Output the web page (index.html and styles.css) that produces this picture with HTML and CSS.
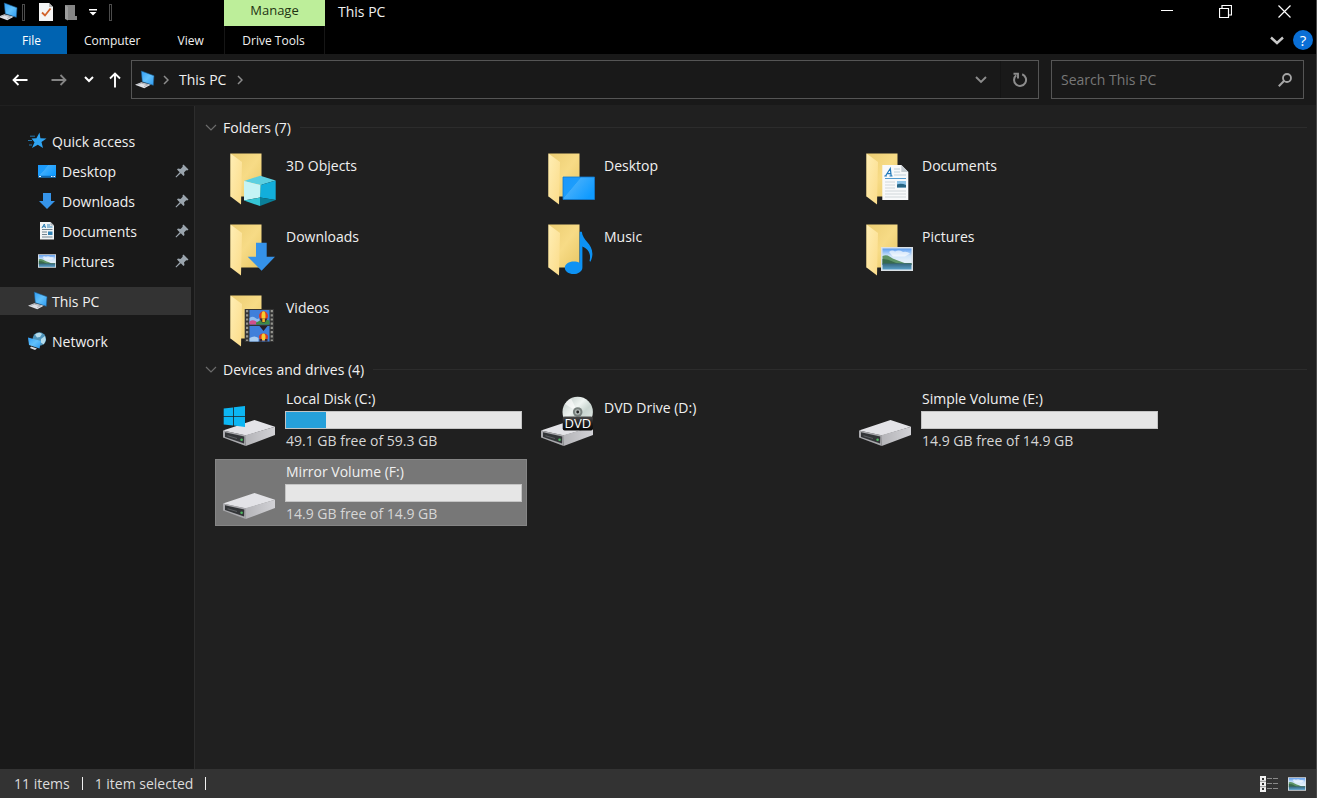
FILE: index.html
```html
<!DOCTYPE html>
<html lang="en">
<head>
<meta charset="utf-8">
<title>This PC</title>
<link rel="stylesheet" href="styles.css">
</head>
<body>
<svg class="defs" aria-hidden="true">
  <defs>
    <linearGradient id="gBack" x1="0" y1="0" x2="1" y2="1"><stop offset="0" stop-color="#eccd72"/><stop offset="0.5" stop-color="#f7db86"/><stop offset="1" stop-color="#e8c765"/></linearGradient>
    <linearGradient id="gFlap" x1="0" y1="0" x2="1" y2="1"><stop offset="0" stop-color="#ffeeb4"/><stop offset="1" stop-color="#fbdc8a"/></linearGradient>
    <linearGradient id="gScreen" x1="0" y1="0" x2="1" y2="1"><stop offset="0" stop-color="#2f9df5"/><stop offset="0.5" stop-color="#62c1fb"/><stop offset="1" stop-color="#2c98f0"/></linearGradient>
    <linearGradient id="gDesk" x1="0" y1="0" x2="1" y2="0.6"><stop offset="0" stop-color="#1c97fb"/><stop offset="0.42" stop-color="#1c9dfc"/><stop offset="0.44" stop-color="#3dacfc"/><stop offset="1" stop-color="#109bff"/></linearGradient>
    <linearGradient id="gSky" x1="0" y1="0" x2="0" y2="1"><stop offset="0" stop-color="#5b9df0"/><stop offset="0.35" stop-color="#cfe4fa"/><stop offset="0.6" stop-color="#e4f0fa"/></linearGradient>
    <linearGradient id="gSea" x1="0" y1="0" x2="0" y2="1"><stop offset="0" stop-color="#35647c"/><stop offset="1" stop-color="#5aa0c8"/></linearGradient>
    <linearGradient id="gSide" x1="0" y1="0" x2="1" y2="0"><stop offset="0" stop-color="#b4b4b8"/><stop offset="1" stop-color="#d2d2d6"/></linearGradient>
    <linearGradient id="gDisc" x1="0" y1="0" x2="1" y2="1"><stop offset="0" stop-color="#b9c4c1"/><stop offset="0.4" stop-color="#eef4f1"/><stop offset="0.6" stop-color="#c9d5d0"/><stop offset="1" stop-color="#e8efec"/></linearGradient>
    <linearGradient id="gLabel" x1="0" y1="0" x2="0" y2="1"><stop offset="0" stop-color="#4a4a4a"/><stop offset="0.5" stop-color="#1c1c1c"/><stop offset="1" stop-color="#080808"/></linearGradient>
  </defs>
  <symbol id="pc" viewBox="0 0 20 20">
    <path d="M6.3 1 19 5.7 18.3 15.3 7.3 11.7z" fill="url(#gScreen)" stroke="#1d5f93" stroke-width=".6"/>
    <path d="M0 14.7 6.3 12.3 15.7 14.7 9.3 18.3z" fill="#dfe1e6"/>
    <path d="M2.5 14.6 6.5 13.2 13 14.9M9 16.6l3.6-1.8" fill="none" stroke="#9a9ea6" stroke-width=".7"/>
  </symbol>
  <symbol id="pin" viewBox="0 0 14 14">
    <path d="M8.500.5 13.500 5.500 12.300 6.500 11.200 6.300 9 8.500 9.500 11 8.500 12 5.800 9.300 1.200 13.500.5 12.800 4.700 8.200 2 5.500 3 4.500 5.500 5 7.700 2.800 7.500 1.500z" fill="#9aa4ad"/>
  </symbol>
  <symbol id="picture" viewBox="0 0 32 24">
    <path d="M0 0h32v24H0z" fill="#dbe1e6"/>
    <path d="M1.500 1.500h29v21h-29z" fill="url(#gSky)"/>
    <path d="M8 5q3-2.500 6-.5 4-2 8 .5 4-1 7 1.500l-5 3H12z" fill="#fff" opacity=".65"/>
    <path d="M1.500 9q4-1.500 7 .5t7 3.500 8 3h7v2h-29z" fill="#5e9467"/>
    <path d="M1.500 12q6 0 10 2.500t10 2h9v1h-29z" fill="#386a4c"/>
    <path d="M1.500 16.500h29v6h-29z" fill="url(#gSea)"/>
  </symbol>
  <symbol id="folder" viewBox="0 0 56 58">
    <path d="M9.500 3.500h31v43h-31z" fill="url(#gBack)"/>
    <path d="M9.500 3.500 21 12 20 54.500 9.500 46.500z" fill="url(#gFlap)"/>
  </symbol>
  <symbol id="drive" viewBox="0 0 56 58">
    <path d="M2 38.500 33.500 28 54 34.700 25 43.500z" fill="#e3e3e7"/>
    <path d="M25 43 54 34.700V43L24.700 54z" fill="url(#gSide)"/>
    <path d="M2 38.500 25 43.200 24.700 54 2 45.500z" fill="#a9a9ad"/>
    <path d="M4 40.300 23.300 44.400 23.100 51.600 4 45z" fill="#333538"/>
    <path d="M6.500 43.300 16 45.900v1L6.500 44.300z" fill="#5c5e61"/>
    <circle cx="20.600" cy="47.800" r="1.300" fill="#4fb860"/>
  </symbol>
</svg>

<div class="window">
  <header class="titlebar">
    <div class="quickbar">
      <svg class="ico20 app-ico" aria-hidden="true"><use href="#pc"/></svg>
      <span class="grip"></span>
      <button class="quick prop" aria-label="Properties">
        <svg width="14" height="18" viewBox="0 0 14 18"><path d="M0 0h10l4 4v14H0z" fill="#f4f4f4"/><path d="M10 0v4h4z" fill="#b9b9b9"/><path d="M3 9.500 6 12.500 11.500 5.500" fill="none" stroke="#d2622a" stroke-width="1.800"/></svg>
      </button>
      <button class="quick newf" aria-label="New folder">
        <svg width="12" height="17" viewBox="0 0 12 17"><path d="M0 1h10v11h2v4H3z" fill="#858585"/><path d="M0 1 3 3v13.500L0 15z" fill="#9c9c9c"/></svg>
      </button>
      <button class="quick more" aria-label="Customize Quick Access Toolbar">
        <svg width="8" height="7" viewBox="0 0 8 7"><path d="M0 0h8v1.400H0zM.5 3h7L4 6.500z" fill="#fff"/></svg>
      </button>
      <span class="grip"></span>
    </div>
    <div class="manage">Manage</div>
    <h1 class="title">This PC</h1>
    <div class="controls">
      <button aria-label="Minimize"><svg width="12" height="12" viewBox="0 0 12 12"><path d="M0 5.500h12" stroke="#fff"/></svg></button>
      <button aria-label="Restore"><svg width="13" height="13" viewBox="0 0 13 13"><path d="M.5 3.500h9v9h-9zM3 3V.5h9.500V10H10" fill="none" stroke="#fff" stroke-width="1.200"/></svg></button>
      <button aria-label="Close"><svg width="13" height="13" viewBox="0 0 13 13"><path d="M.5.5l12 12M12.500.5l-12 12" stroke="#fff" stroke-width="1.200"/></svg></button>
    </div>
  </header>

  <nav class="ribbon" aria-label="Ribbon">
    <button class="tab file">File</button>
    <div class="tabs"><button class="tab">Computer</button><button class="tab">View</button></div>
    <button class="tab tools">Drive Tools</button>
    <div class="ribbon-end">
      <button aria-label="Expand the Ribbon"><svg width="14" height="9" viewBox="0 0 14 9"><path d="M1 1.500l6 5.500 6-5.500" fill="none" stroke="#c8c8c8" stroke-width="2.400"/></svg></button>
      <button class="help" aria-label="Help">?</button>
    </div>
  </nav>

  <div class="navrow">
    <div class="arrows">
      <button class="arrow" aria-label="Back"><svg width="16" height="12" viewBox="0 0 16 12"><path d="M6.500 1 1.500 6l5 5M1.500 6H15.500" fill="none" stroke="#fff" stroke-width="1.800"/></svg></button>
      <button class="arrow fwd" aria-label="Forward"><svg width="16" height="12" viewBox="0 0 16 12"><path d="M9.500 1l5 5-5 5M14.500 6H.5" fill="none" stroke="#858585" stroke-width="1.800"/></svg></button>
      <button class="arrow recent" aria-label="Recent locations"><svg width="10" height="7" viewBox="0 0 10 7"><path d="M1 1l4 4 4-4" fill="none" stroke="#fff" stroke-width="2"/></svg></button>
      <button class="arrow" aria-label="Up"><svg width="12" height="16" viewBox="0 0 12 16"><path d="M1 6.500l5-5 5 5M6 1.500V15.500" fill="none" stroke="#fff" stroke-width="1.900"/></svg></button>
    </div>
    <div class="address">
      <svg class="ico20" aria-hidden="true"><use href="#pc"/></svg>
      <svg class="crumb-sep" width="6" height="10" viewBox="0 0 6 10"><path d="M1 1l4 4-4 4" fill="none" stroke="#8c8c8c" stroke-width="1.500"/></svg>
      <button class="crumb">This PC</button>
      <svg class="crumb-sep" width="6" height="10" viewBox="0 0 6 10"><path d="M1 1l4 4-4 4" fill="none" stroke="#8c8c8c" stroke-width="1.500"/></svg>
      <span class="grow"></span>
      <button class="addr-btn" aria-label="Previous locations"><svg width="12" height="8" viewBox="0 0 12 8"><path d="M1 1l5 5 5-5" fill="none" stroke="#8c8c8c" stroke-width="1.900"/></svg></button>
      <button class="addr-btn refresh" aria-label="Refresh"><svg width="16" height="16" viewBox="0 0 16 16"><path d="M10.200 2.300A6 6 0 1 1 4.200 3.300" fill="none" stroke="#8c8c8c" stroke-width="2"/><path d="M1.500 1.700H6V6.500" fill="none" stroke="#8c8c8c" stroke-width="1.900"/></svg></button>
    </div>
    <form class="search">
      <input type="text" aria-label="Search This PC" placeholder="Search This PC">
      <button type="button" aria-label="Search"><svg width="14" height="14" viewBox="0 0 14 14"><circle cx="9" cy="5" r="4" fill="none" stroke="#a5a5a5" stroke-width="1.800"/><path d="M6.200 7.800.8 13.200" stroke="#a5a5a5" stroke-width="2"/></svg></button>
    </form>
  </div>

  <div class="body">
    <nav class="sidebar" aria-label="Navigation pane">
      <a class="item" href="#quick">
        <svg class="ico20" viewBox="0 0 20 20" aria-hidden="true"><path d="M11.500 1.500 12.400 7.200 18.500 7.500 13.500 11 15 17 9.800 13.800 4 17 6.500 11.300 3.500 7.400 8.400 7.200z" fill="#2fa4f2"/><path d="M2 5.200h5M0 9.500h4M1 14h3" stroke="#2577ad"/></svg>
        <span>Quick access</span></a>
      <a class="item sub" href="#desktop">
        <svg class="ico20" viewBox="0 0 20 20" aria-hidden="true"><path d="M0 4h18v12.500H0z" fill="url(#gDesk)"/><path d="M0 15.500h18" stroke="#0d6ab8" stroke-width="1.500"/><path d="M1 15.500h2M13 15.500h1.500M15.500 15.500H17" stroke="#e9f5ff"/></svg>
        <span>Desktop</span><svg class="pin" aria-hidden="true"><use href="#pin"/></svg></a>
      <a class="item sub" href="#downloads">
        <svg class="ico20" viewBox="0 0 20 20" aria-hidden="true"><path d="M5 2h8v8h4L9 18 1 10h4z" fill="#3694e9"/></svg>
        <span>Downloads</span><svg class="pin" aria-hidden="true"><use href="#pin"/></svg></a>
      <a class="item sub" href="#documents">
        <svg class="ico20" viewBox="0 0 20 20" aria-hidden="true"><path d="M2 1h10.500L16 4.500V18.500H2z" fill="#f2f4f5"/><path d="M12.500 1v3.500H16z" fill="#aab2b8"/><path d="M4 7 6.300 3 7.500 7M4.700 5.700h2.500M9 4h3M9 6h5.500" fill="none" stroke="#2f83b8"/><path d="M4 8.500h10.500M4 11h5M4 13.500h5M4 16h10.500" stroke="#71838f"/><path d="M10 10.500h4.500v3.500H10z" fill="#3182b4"/></svg>
        <span>Documents</span><svg class="pin" aria-hidden="true"><use href="#pin"/></svg></a>
      <a class="item sub" href="#pictures">
        <svg class="ico20" viewBox="0 0 20 20" aria-hidden="true"><use href="#picture" x="0" y="3" width="18" height="14"/></svg>
        <span>Pictures</span><svg class="pin" aria-hidden="true"><use href="#pin"/></svg></a>
      <a class="item root selected" href="#pc-root" aria-current="page">
        <svg class="ico20" aria-hidden="true"><use href="#pc"/></svg>
        <span>This PC</span></a>
      <a class="item root" href="#network">
        <svg class="ico20" viewBox="0 0 20 20" aria-hidden="true"><circle cx="11.300" cy="8" r="6.800" fill="#4f94ba"/><path d="M7 3.500q4-3 7-.5l-2 3-3 .5zM13 8l4-3 .8 4-2 4.500-3-2z" fill="#b5dcec"/><path d="M0 6.500 13 10 11.500 17.500 1 14z" fill="url(#gScreen)"/><path d="M3 15.500l6 2-2 1.500-5-2z" fill="#d7dbe0"/></svg>
        <span>Network</span></a>
    </nav>

    <main class="content">
      <button class="group" aria-expanded="true">
        <svg width="12" height="7" viewBox="0 0 12 7"><path d="M1 1l5 5 5-5" fill="none" stroke="#6c6c6c" stroke-width="1.200"/></svg>
        <span>Folders (7)</span><i></i>
      </button>
      <section class="grid folders" aria-label="Folders">
        <a class="tile" href="#3d">
          <svg class="big" viewBox="0 0 56 58" aria-hidden="true"><use href="#folder"/><path d="M23 31 39.300 25.700 54.700 30.500 39.500 35z" fill="#5ccfe0"/><path d="M23 31 39.500 35 39 47.500 23 50.500z" fill="#c5f3f5"/><path d="M39.500 35 54.700 30.500V50L39 47.500z" fill="#12aedb"/><path d="M23 50.500 39 47.500 39 56z" fill="#35c5d5"/><path d="M39 47.500 54.700 50 39 56z" fill="#0a7f99"/></svg>
          <span class="name">3D Objects</span></a>
        <a class="tile" href="#desktop">
          <svg class="big" viewBox="0 0 56 58" aria-hidden="true"><use href="#folder"/><path d="M24 27h31.500v22.500H24z" fill="url(#gDesk)" stroke="#0f79cf" stroke-width=".8"/></svg>
          <span class="name">Desktop</span></a>
        <a class="tile" href="#documents">
          <svg class="big" viewBox="0 0 56 58" aria-hidden="true"><use href="#folder"/><path d="M25.300 15h19l7 7v28h-26z" fill="#f8f9fa"/><path d="M44.300 15v7h7z" fill="#c5ccd1"/><path d="M28.500 26 33.300 18.500 34.200 26M30 23.700h4M27.300 26h2.500M32.500 26h3" fill="none" stroke="#1f78ba" stroke-width="1.200"/><path d="M37 19h6M37 22h6M37 25h12" stroke="#b8c9d6" stroke-width=".9"/><path d="M28 28.500h21" stroke="#3e8fc8" stroke-width=".9"/><path d="M28 32h10M28 35h10M28 38h10M28 41h21M28 44h21M28 47h21" stroke="#cdd3d7" stroke-width=".9"/><path d="M40 31h9v6.500h-9z" fill="#8ec4e8"/><path d="M40 34.500q4-1.500 9 .5v2.500h-9z" fill="#286584"/></svg>
          <span class="name">Documents</span></a>
        <a class="tile" href="#downloads">
          <svg class="big" viewBox="0 0 56 58" aria-hidden="true"><use href="#folder"/><path d="M35 21.700h10.700v14H54L40.600 49.700 26.700 35.700H35z" fill="#3592e9"/></svg>
          <span class="name">Downloads</span></a>
        <a class="tile" href="#music">
          <svg class="big" viewBox="0 0 56 58" aria-hidden="true"><use href="#folder"/><path d="M40.600 10.700h2.200c.8 9 10.600 11.500 10.600 22 0 3-.8 5.600-2 8-1-.5-1-.8-.7-1.600 1.600-7-2.300-11.500-7.300-13.600V46.500c0 4-4.400 6.600-8.800 6.600-5 0-8.800-2.600-8.800-6.300s4-6.400 9-6.400c2.200 0 4.200.5 5.800 1.400z" fill="#0d92f4"/></svg>
          <span class="name">Music</span></a>
        <a class="tile" href="#pictures">
          <svg class="big" viewBox="0 0 56 58" aria-hidden="true"><use href="#folder"/><use href="#picture" x="24" y="26" width="32" height="24"/></svg>
          <span class="name">Pictures</span></a>
        <a class="tile" href="#videos">
          <svg class="big" viewBox="0 0 56 58" aria-hidden="true"><use href="#folder"/><path d="M23.700 17h29.300v33H23.700z" fill="#343434"/><path d="M28.500 18h20v14.500h-20zM28.500 34h20v15.500h-20z" fill="#3f7fda"/><path d="M28.500 26q3-2.500 6 0t4-1v6h-10z" fill="#8fbdf0"/><path d="M28.500 29.500q3-2.500 7 0v3h-7z" fill="#d0508c"/><path d="M35 30.500q6-4 13.500-2v4H35z" fill="#3f8a45"/><path d="M28.500 46q5-3 9 0v3.500h-9z" fill="#a8cdf2"/><ellipse cx="42.500" cy="24" rx="4.500" ry="4.700" fill="#db3b27"/><ellipse cx="42.500" cy="24" rx="2" ry="4.700" fill="#f7cd2e"/><path d="M38.500 26.500h8l-2.500 4h-3z" fill="#392c30"/><path d="M41.300 26.500h2.600v3.500h-2.600z" fill="#f2b52b"/><path d="M38.500 34h8l-4 5z" fill="#271d25"/><ellipse cx="42.500" cy="45" rx="4.500" ry="3.500" fill="#d83a28"/><ellipse cx="42.500" cy="45" rx="2" ry="3.500" fill="#f7cd2e"/><path d="M38.500 47h2.500v2.500h-2.500zM44 47h2.500v2.500H44z" fill="#392c30"/><path d="M26.100 18v31M50.800 18v31" stroke="#96968f" stroke-width="2.200" stroke-dasharray="2.200 2"/></svg>
          <span class="name">Videos</span></a>
      </section>

      <button class="group" aria-expanded="true">
        <svg width="12" height="7" viewBox="0 0 12 7"><path d="M1 1l5 5 5-5" fill="none" stroke="#6c6c6c" stroke-width="1.200"/></svg>
        <span>Devices and drives (4)</span><i></i>
      </button>
      <section class="grid drives" aria-label="Devices and drives">
        <a class="tile" href="#c">
          <svg class="big" viewBox="0 0 56 58" aria-hidden="true"><use href="#drive"/><path d="M2.700 16.500 12 15.400V24.300H2.700zM12.800 15.300 24 14V24.300H12.800zM2.700 25.100H12V33.500L2.700 32.500zM12.800 25.100H24V35L12.800 33.600z" fill="#0cb6f3"/></svg>
          <span class="info"><span class="label">Local Disk (C:)</span><span class="bar"><b style="width:17.200%"></b></span><span class="free">49.1 GB free of 59.3 GB</span></span></a>
        <a class="tile" href="#d">
          <svg class="big" viewBox="0 0 56 58" aria-hidden="true"><use href="#drive"/><circle cx="38.700" cy="20" r="15.200" fill="url(#gDisc)"/><path d="M38.700 20 26 12a15 15 0 0 1 6-5.500z" fill="#fff" opacity=".6"/><circle cx="38.700" cy="20" r="4.800" fill="#77807d"/><circle cx="38.700" cy="20" r="2.800" fill="#b2bab7"/><circle cx="38.700" cy="20" r="1.400" fill="#222"/><rect x="23.700" y="24.500" width="30.300" height="14" rx="2" fill="url(#gLabel)"/><text class="dvd" x="38.900" y="36" text-anchor="middle">DVD</text></svg>
          <span class="name">DVD Drive (D:)</span></a>
        <a class="tile" href="#e">
          <svg class="big" viewBox="0 0 56 58" aria-hidden="true"><use href="#drive"/></svg>
          <span class="info"><span class="label">Simple Volume (E:)</span><span class="bar"></span><span class="free">14.9 GB free of 14.9 GB</span></span></a>
        <a class="tile chosen" href="#f">
          <svg class="big" viewBox="0 0 56 58" aria-hidden="true"><use href="#drive"/></svg>
          <span class="info"><span class="label">Mirror Volume (F:)</span><span class="bar"></span><span class="free">14.9 GB free of 14.9 GB</span></span></a>
      </section>
    </main>
  </div>

  <footer class="status">
    <span class="cell">11 items</span><span class="cell">1 item selected</span>
    <div class="views">
      <button aria-label="Details view"><svg width="18" height="16" viewBox="0 0 18 16"><path d="M0 0h6v16H0z" fill="#f0f0f0"/><path d="M0 5.300h6M0 10.700h6" stroke="#777" stroke-width=".8"/><path d="M2 2h2v2H2zM2 7h2v2H2zM2 12h2v2H2z" fill="#333"/><path d="M7 2.500h11M7 7.500h11M7 12.500h11" stroke="#8a8a8a" stroke-dasharray="5 1"/></svg></button>
      <button aria-label="Large icons view"><svg width="18" height="14"><use href="#picture" width="18" height="14"/></svg></button>
    </div>
  </footer>
</div>
</body>
</html>
```

FILE: styles.css
```css
* { box-sizing: border-box; }

body {
  margin: 0;
  background: #202020;
  color: #f0f0f0;
  font: 14px/20px "Open Sans", "Noto Sans", sans-serif;
}

button {
  margin: 0;
  padding: 0;
  border: 0;
  background: none;
  color: inherit;
  font: inherit;
}

a { color: inherit; text-decoration: none; }
svg { display: block; flex: none; }
.defs { position: absolute; width: 0; height: 0; }
.ico20 { width: 20px; height: 20px; }
.grow { flex: 1; }

.window {
  display: flex;
  flex-direction: column;
  min-height: 100vh;
  border-right: 1px solid #4a4a4a;
}

/* Title bar */
.titlebar { display: flex; height: 26px; background: #000; }
.quickbar { display: flex; align-items: center; width: 224px; height: 24px; }
.app-ico { margin-left: -2px; }
.grip { width: 3px; height: 17px; margin-left: 4px; border: 1px solid #4c4c4c; }
.prop { margin-left: 14px; }
.newf { margin-left: 12px; }
.more { margin-left: 12px; margin-right: 8px; }
.manage {
  width: 101px;
  background: #bdee9a;
  color: #1f3312;
  font-size: 13px;
  line-height: 21px;
  text-align: center;
}
.title { margin: 0 0 0 13px; font-size: 14px; font-weight: 400; line-height: 24px; }
.controls { display: flex; margin-left: auto; margin-right: 2px; height: 22px; }
.controls button { display: grid; place-items: center; width: 59px; }

/* Ribbon tabs */
.ribbon { display: flex; height: 28px; background: #000; }
.tab { font-size: 12px; line-height: 28px; text-align: center; padding-top: 1px; }
.file { width: 67px; padding-right: 4px; background: #0063b1; color: #fff; }
.tabs { display: flex; width: 157px; padding-left: 17px; gap: 37px; }
.tools { width: 101px; padding-right: 2px; border-left: 1px solid #161616; border-right: 1px solid #161616; }
.ribbon-end { display: flex; align-items: center; gap: 9px; margin-left: auto; padding-right: 3px; }
.help {
  width: 20px;
  height: 20px;
  border-radius: 50%;
  background: #0a6fd6;
  color: #fff;
  font-size: 15px;
}

/* Address row */
.navrow {
  display: flex;
  align-items: center;
  height: 52px;
  padding-right: 12px;
  background: #191919;
  border-bottom: 1px solid #202020;
}
.arrows { display: flex; align-items: center; width: 131px; padding-left: 12px; }
.fwd { margin-left: 23px; }
.recent { margin: 0 15px 0 17px; }
.address {
  display: flex;
  flex: 1;
  align-items: center;
  height: 39px;
  padding-left: 3px;
  border: 1px solid #555;
}
.crumb-sep { margin-left: 8px; }
.crumb { margin-left: 10px; }
.crumb + .crumb-sep { margin-left: 11px; }
.addr-btn { display: grid; place-items: center; width: 38px; height: 37px; }
.refresh { border-left: 1px solid #141414; }
.search {
  display: flex;
  align-items: center;
  width: 253px;
  height: 39px;
  margin-left: 12px;
  padding: 0 11px 0 9px;
  border: 1px solid #555;
}
.search input {
  flex: 1;
  min-width: 0;
  padding: 0;
  border: 0;
  outline: 0;
  background: none;
  color: #f0f0f0;
  font: inherit;
}
.search input::placeholder { color: #777; opacity: 1; }

/* Navigation pane */
.body { display: flex; flex: 1; }
.sidebar {
  display: flex;
  flex-direction: column;
  gap: 2px;
  width: 195px;
  padding: 21px 3px 0 0;
  background: #191919;
  border-right: 1px solid #2d2d2d;
}
.item { display: flex; align-items: center; gap: 4px; height: 28px; padding: 0 2px 0 28px; }
.item span { padding-top: 1px; }
.sub { padding-left: 38px; }
.root { margin-top: 10px; }
.selected { background: #333; }
.pin { width: 14px; height: 14px; margin-left: auto; }

/* File list */
.content {
  display: flex;
  flex: 1;
  flex-direction: column;
  gap: 4px;
  padding: 9px 9px 0 10px;
}
.group { display: flex; align-items: center; gap: 6px; height: 25px; text-align: left; }
.group i { flex: 1; height: 1px; margin-left: 3px; background: #2c2c2c; }
.grid { display: grid; grid-template-columns: repeat(auto-fill, 312px); column-gap: 6px; padding-left: 10px; }
.folders { row-gap: 4px; }
.drives { row-gap: 6px; }
.tile { display: flex; gap: 8px; height: 67px; padding: 0 5px 0 6px; }
.big { width: 56px; height: 58px; margin-top: 6px; overflow: visible; }
.name { margin-top: 12px; padding-left: 1px; }
.info { display: flex; flex: 1; flex-direction: column; padding-top: 3px; }
.label, .free { padding-left: 1px; }
.label { height: 22px; }
.free { color: #d6d6d6; line-height: 24px; }
.bar { display: flex; height: 18px; border: 1px solid #c4c4c4; background: #e6e6e6; }
.bar b { background: #26a0da; }
.chosen { background: #777; box-shadow: inset 0 0 0 1px #858585; }
.dvd { fill: #fff; font-family: "Open Sans", sans-serif; font-size: 13px; }

/* Status bar */
.status { display: flex; align-items: center; height: 29px; padding-left: 14px; background: #333; color: #dcdcdc; }
.cell { display: flex; align-items: center; }
.cell::after { content: ""; width: 1px; height: 13px; margin: 0 12px; background: #f0f0f0; }
.views { display: flex; align-items: center; gap: 10px; margin-left: auto; padding-right: 10px; }
```
